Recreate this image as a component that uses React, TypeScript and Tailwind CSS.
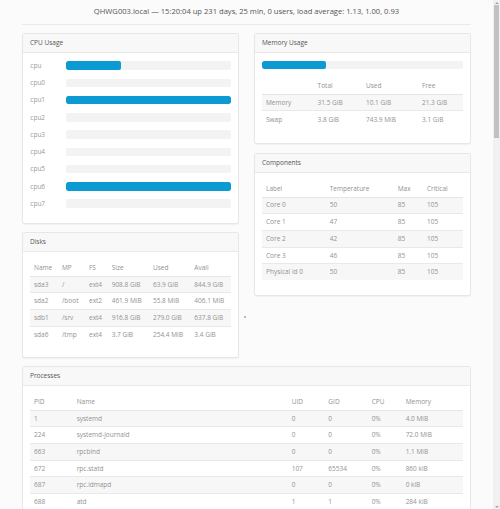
import type { ReactNode } from 'react';

type Row = (string | number)[];

const cpus = [
  { name: 'cpu', pct: 33.5 },
  { name: 'cpu0', pct: 0 },
  { name: 'cpu1', pct: 100 },
  { name: 'cpu2', pct: 0 },
  { name: 'cpu3', pct: 0 },
  { name: 'cpu4', pct: 0 },
  { name: 'cpu5', pct: 0 },
  { name: 'cpu6', pct: 100 },
  { name: 'cpu7', pct: 0 },
];

const disks: Row[] = [
  ['sda3', '/', 'ext4', '908.8 GiB', '63.9 GiB', '844.9 GiB'],
  ['sda2', '/boot', 'ext2', '461.9 MiB', '55.8 MiB', '406.1 MiB'],
  ['sdb1', '/srv', 'ext4', '916.8 GiB', '279.0 GiB', '637.8 GiB'],
  ['sda6', '/tmp', 'ext4', '3.7 GiB', '254.4 MiB', '3.4 GiB'],
];

const memory: Row[] = [
  ['Memory', '31.5 GiB', '10.1 GiB', '21.3 GiB'],
  ['Swap', '3.8 GiB', '743.9 MiB', '3.1 GiB'],
];

const components: Row[] = [
  ['Core 0', 50, 85, 105],
  ['Core 1', 47, 85, 105],
  ['Core 2', 42, 85, 105],
  ['Core 3', 46, 85, 105],
  ['Physical id 0', 50, 85, 105],
];

const processes: Row[] = [
  [1, 'systemd', 0, 0, '0%', '4.0 MiB'],
  [224, 'systemd-journald', 0, 0, '0%', '72.0 MiB'],
  [663, 'rpcbind', 0, 0, '0%', '1.1 MiB'],
  [672, 'rpc.statd', 107, 65534, '0%', '860 kiB'],
  [687, 'rpc.idmapd', 0, 0, '0%', '0 kiB'],
  [688, 'atd', 1, 1, '0%', '284 kiB'],
];

function Card({ title, children, className = '' }: { title: string; children: ReactNode; className?: string }) {
  return (
    <div className={`bg-white border border-[#e7e7e7] rounded-[2px] shadow-[0_1px_1px_rgba(0,0,0,0.04)] ${className}`}>
      <div className="h-[19px] px-[7px] flex items-center bg-[#f8f8f8] border-b border-[#e9e9e9] text-[6.5px] text-[#555]">
        {title}
      </div>
      {children}
    </div>
  );
}

function Bar({ pct }: { pct: number }) {
  return (
    <div className="h-[8.6px] w-full rounded-[2px] bg-[#f3f3f3] overflow-hidden">
      <div className="h-full bg-[#0b9bd2] rounded-[2px]" style={{ width: `${pct}%` }} />
    </div>
  );
}

function Table({ head, rows, widths }: { head: string[]; rows: Row[]; widths: string[] }) {
  return (
    <table className="w-full table-fixed border-collapse text-[6.5px] text-[#929292]">
      <thead>
        <tr className="border-b border-[#e6e6e6]">
          {head.map((h, i) => (
            <th key={i} className={`h-[16.7px] px-[3.7px] py-0 text-left font-normal align-middle ${widths[i]}`}>
              {h}
            </th>
          ))}
        </tr>
      </thead>
      <tbody>
        {rows.map((r, i) => (
          <tr key={i} className={`border-t border-[#e9e9e9] ${i % 2 === 0 ? 'bg-[#f7f7f7]' : ''}`}>
            {r.map((c, j) => (
              <td key={j} className="h-[16.7px] px-[3.7px] py-0 align-middle whitespace-nowrap">
                {c}
              </td>
            ))}
          </tr>
        ))}
      </tbody>
    </table>
  );
}

function Scrollbar() {
  return (
    <div className="w-[7px] shrink-0 h-full bg-[#f1f1f1] flex flex-col items-center">
      <div className="h-[5px] flex items-center justify-center">
        <div className="w-0 h-0 border-x-[2px] border-x-transparent border-b-[2px] border-b-[#a3a3a3]" />
      </div>
      <div className="w-[5px] h-[133px] bg-[#c1c1c1]" />
      <div className="flex-1" />
      <div className="h-[5px] flex items-center justify-center">
        <div className="w-0 h-0 border-x-[2px] border-x-transparent border-t-[2px] border-t-[#a3a3a3]" />
      </div>
    </div>
  );
}

export default function App() {
  return (
    <div className="h-[509px] overflow-hidden flex bg-[#fbfbfb] font-['Open_Sans',sans-serif]">
      <div className="flex-1 min-w-0">
        <div className="w-[449px] mx-auto">
          <div className="h-[25px] flex items-center justify-center text-[7.6px] text-[#555] border-b border-[#eaeaea]">
            QHWG003.local — 15:20:04 up 231 days, 25 min, 0 users, load average: 1.13, 1.00, 0.93
          </div>

          <div className="relative mt-[8px] grid grid-cols-2 gap-x-[15px] items-start">
            <div className="flex flex-col gap-[7.6px]">
              <Card title="CPU Usage">
                <div className="px-[7.3px] pt-[4px] pb-[11px]">
                  {cpus.map((c) => (
                    <div key={c.name} className="h-[17.25px] flex items-center">
                      <div className="w-[36.2px] shrink-0 text-[6.5px] text-[#999]">{c.name}</div>
                      <Bar pct={c.pct} />
                    </div>
                  ))}
                </div>
              </Card>
              <Card title="Disks">
                <div className="px-[7.3px] pt-[7.5px] pb-[14px]">
                  <Table
                    head={['Name', 'MP', 'FS', 'Size', 'Used', 'Avail']}
                    rows={disks}
                    widths={['w-[28px]', 'w-[27px]', 'w-[22.7px]', 'w-[41.3px]', 'w-[41.4px]', '']}
                  />
                </div>
              </Card>
            </div>

            <div className="flex flex-col gap-[9.7px]">
              <Card title="Memory Usage">
                <div className="px-[7.3px] pt-[7.7px] pb-[15px]">
                  <Bar pct={32} />
                  <div className="mt-[8.3px]">
                    <Table
                      head={['', 'Total', 'Used', 'Free']}
                      rows={memory}
                      widths={['w-[51.6px]', 'w-[48.4px]', 'w-[56px]', '']}
                    />
                  </div>
                </div>
              </Card>
              <Card title="Components">
                <div className="px-[7.3px] pt-[7px] pb-[15px]">
                  <Table
                    head={['Label', 'Temperature', 'Max', 'Critical']}
                    rows={components}
                    widths={['w-[63.7px]', 'w-[68px]', 'w-[29.3px]', '']}
                  />
                </div>
              </Card>
            </div>

            <span className="absolute left-[222px] top-[283px] w-[1.5px] h-[1.5px] bg-[#bbb]" />
          </div>

          <Card title="Processes" className="mt-[8.3px]">
            <div className="px-[7.3px] pt-[7.3px] pb-[15px]">
              <Table
                head={['PID', 'Name', 'UID', 'GID', 'CPU', 'Memory']}
                rows={processes}
                widths={['w-[42.7px]', 'w-[215px]', 'w-[36.7px]', 'w-[43.3px]', 'w-[34px]', '']}
              />
            </div>
          </Card>
        </div>
      </div>
      <Scrollbar />
    </div>
  );
}
